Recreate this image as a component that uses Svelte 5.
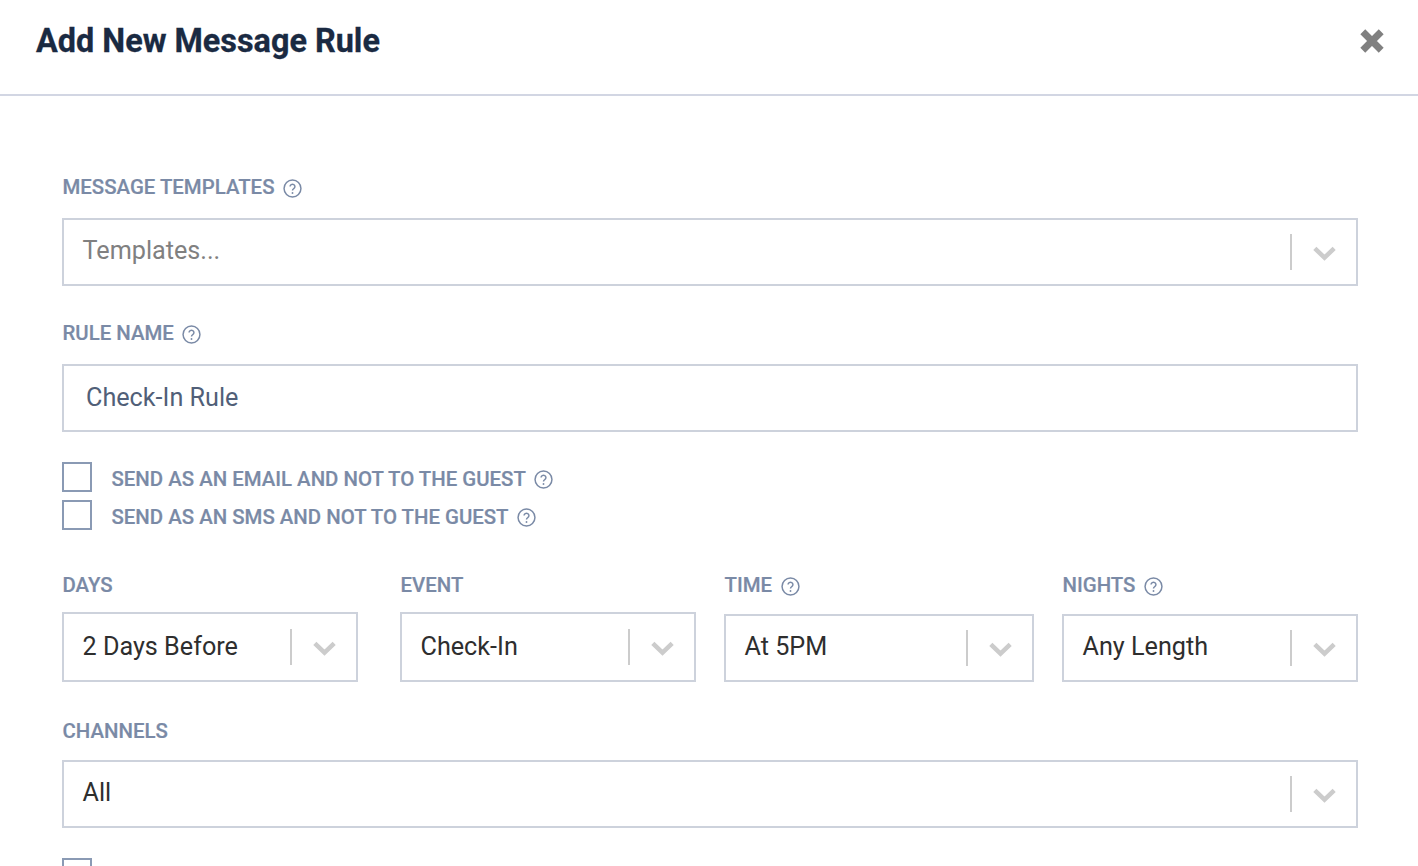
<script>
  const row = [
    { label: 'DAYS', value: '2 Days Before', help: false, w: 'w296', gap: 'g42', low: false },
    { label: 'EVENT', value: 'Check-In', help: false, w: 'w296', gap: 'g28', low: false },
    { label: 'TIME', value: 'At 5PM', help: true, w: 'w310', gap: 'g28', low: true },
    { label: 'NIGHTS', value: 'Any Length', help: true, w: 'w296', gap: '', low: true }
  ];
</script>

{#snippet help()}
  <svg class="help" viewBox="0 0 18 18" width="19" height="19" aria-hidden="true">
    <circle cx="9" cy="9" r="8" fill="none" stroke="#7a8aa6" stroke-width="1.4" />
    <path d="M6.7 7.2a2.3 2.2 0 1 1 3.5 1.9c-.8.5-1.2.9-1.2 1.8" fill="none" stroke="#7a8aa6" stroke-width="1.4" />
    <circle cx="9" cy="13.2" r=".9" fill="#7a8aa6" />
  </svg>
{/snippet}

{#snippet arrow()}
  <span class="sep"></span>
  <span class="chev">
    <svg viewBox="0 0 22 14" width="25" height="16" aria-hidden="true">
      <path d="M2.5 3 11 11 19.5 3" fill="none" stroke="#cccccc" stroke-width="4" />
    </svg>
  </span>
{/snippet}

<div class="page">
  <header>
    <h1>Add New Message Rule</h1>
    <svg class="close" viewBox="0 0 24 24" width="26" height="26" aria-hidden="true">
      <path d="M3.5 3.5 20.5 20.5M20.5 3.5 3.5 20.5" fill="none" stroke="#808080" stroke-width="6.4" />
    </svg>
  </header>

  <main>
    <div class="lab l1"><span>MESSAGE TEMPLATES</span>{@render help()}</div>
    <div class="box"><span class="val ph">Templates...</span>{@render arrow()}</div>

    <div class="lab l2"><span>RULE NAME</span>{@render help()}</div>
    <div class="box input"><span class="val name">Check-In Rule</span></div>

    <div class="check c1"><span class="cb"></span><span class="ct">SEND AS AN EMAIL AND NOT TO THE GUEST</span>{@render help()}</div>
    <div class="check c2"><span class="cb"></span><span class="ct">SEND AS AN SMS AND NOT TO THE GUEST</span>{@render help()}</div>

    <div class="row">
      {#each row as r}
        <div class="col {r.w} {r.gap}">
          <div class="lab l3"><span>{r.label}</span>{#if r.help}{@render help()}{/if}</div>
          <div class="box tall" class:low={r.low}><span class="val">{r.value}</span>{@render arrow()}</div>
        </div>
      {/each}
    </div>

    <div class="lab l4"><span>CHANNELS</span></div>
    <div class="box"><span class="val">All</span>{@render arrow()}</div>

    <div class="check c3"><span class="cb"></span></div>
  </main>
</div>

<style>
  :global(body) { margin: 0; background: #fff; overflow: hidden; }
  .page { width: 1418px; height: 866px; overflow: hidden; font-family: Roboto, sans-serif; background: #fff; }
  header {
    height: 96px; border-bottom: 2px solid #d2d6e3; display: flex; align-items: center;
    justify-content: space-between; padding: 0 33px 12px 36px; box-sizing: border-box;
  }
  h1 { margin: 0; font-size: 32.4px; line-height: 38px; font-weight: 700; color: #1a2a42; -webkit-text-stroke: 0.3px #1a2a42; }
  main { padding: 0 60px 0 62px; }
  .lab { display: flex; align-items: center; height: 24px; font-size: 20.4px; font-weight: 500; color: #7a8aa6; -webkit-text-stroke: 0.2px #7a8aa6; padding-left: 0.5px; }
  .lab .help { margin-left: 8.5px; margin-top: 3.5px; }
  .l1 { margin-top: 79px; margin-bottom: 19px; }
  .l2 { margin-top: 35px; margin-bottom: 19px; }
  .l4 { margin-top: 37px; margin-bottom: 17px; }
  .box {
    box-sizing: border-box; height: 68px; border: 2px solid #cdd2dc; display: flex; align-items: center;
    padding-left: 18.5px; background: #fff;
  }
  .val { flex: 1; font-size: 25.2px; color: #2e2e2e; margin-top: -4px; }
  .ph { color: #808080; }
  .name { color: #515f78; padding-left: 3.5px; margin-top: -2px; }
  .sep { width: 2px; height: 36px; background: #cccccc; }
  .chev { width: 64px; display: flex; justify-content: center; padding-top: 1px; }
  .check { display: flex; align-items: center; height: 30px; }
  .c1 { margin-top: 30px; }
  .c2 { margin-top: 8px; }
  .c3 { margin-top: 30px; }
  .cb { box-sizing: border-box; width: 30px; height: 30px; border: 2px solid #8a9ab4; background: #fff; flex: none; }
  .ct { margin-left: 19.5px; font-size: 20.4px; font-weight: 500; color: #7a8aa6; -webkit-text-stroke: 0.2px #7a8aa6; margin-top: 4px; }
  .check .help { margin-left: 8.5px; margin-top: 5px; }
  .row { display: flex; margin-top: 43px; }
  .col { display: flex; flex-direction: column; }
  .w296 { width: 296px; }
  .w310 { width: 310px; }
  .g42 { margin-right: 42px; }
  .g28 { margin-right: 28px; }
  .l3 { margin-bottom: 15px; }
  .tall { height: 70px; }
  .tall .val { margin-top: -2px; }
  .low { height: 68px; margin-top: 2px; }
  .low .val { margin-top: -4px; }
</style>
